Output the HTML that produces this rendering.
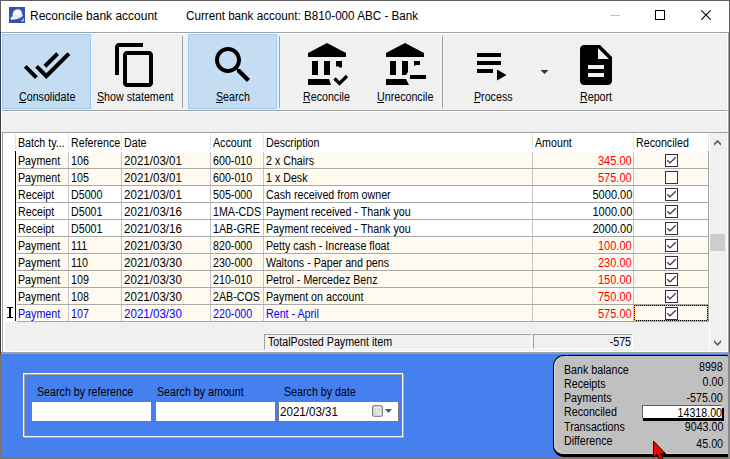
<!DOCTYPE html>
<html><head><meta charset="utf-8">
<style>
*{margin:0;padding:0;box-sizing:border-box}
html,body{width:730px;height:459px;overflow:hidden;background:#fff}
body{position:relative;font-family:"Liberation Sans",sans-serif;font-size:11px;color:#000}
.a{position:absolute}
.t{position:absolute;white-space:nowrap;line-height:13px}
u{text-decoration:none;border-bottom:1px solid #000}
.tb{position:absolute;top:34px;height:75px}
.tb.hot{background:#c4ddf3;border:1px solid #99cdf7}
.lbl{position:absolute;white-space:nowrap;font-size:11px;line-height:13px;top:55px;left:0;right:0;text-align:center}
.sep{position:absolute;top:36px;width:1px;height:72px;background:#a0a0a0}
.row{position:absolute;left:16px;width:692px;height:17px;border-bottom:1px solid #c8c8c8}
.hc{position:absolute;top:133px;height:18px;line-height:18px;white-space:nowrap}
.c{position:absolute;height:16px;line-height:16px;white-space:nowrap;font-size:12px;transform:scaleX(0.89);transform-origin:0 0}
.c.r{transform-origin:100% 0}
.inp{position:absolute;top:401px;height:21px;background:#fff;border:1px solid #7a7a7a}
.cb{position:absolute;width:13px;height:13px;border:1px solid #333;background:#fff}
</style></head><body>
<!-- window borders -->
<div class="a" style="left:0;top:0;width:730px;height:1px;background:#5f5f5f"></div>
<div class="a" style="left:0;top:0;width:1px;height:33px;background:#5f5f5f"></div><div class="a" style="left:0;top:33px;width:1px;height:321px;background:#3c3c3c"></div>
<div class="a" style="left:729px;top:0;width:1px;height:354px;background:#5f5f5f"></div>

<!-- title bar -->
<svg class="a" style="left:9px;top:7px" width="16" height="16" viewBox="0 0 16 16"><rect width="16" height="16" fill="#2f53ae"/><path d="M3.6 9.5 C3.2 5.5 4.8 2.4 8.6 2.2 C12 2.1 13.3 4.5 12.9 8.2 Z" fill="#f6f6fa"/><ellipse cx="7.6" cy="9.9" rx="6.6" ry="2.1" transform="rotate(-17 7.6 9.9)" fill="#ececf4"/><path d="M11.8 14.2 L15 10.8 L14.6 14.4 Z" fill="#c4cce4"/></svg>
<div class="t" style="left:30px;top:9px;font-size:12px;line-height:15px">Reconcile bank account</div>
<div class="t" style="left:186px;top:9px;font-size:12px;line-height:15px;transform:scaleX(0.972);transform-origin:0 0">Current bank account: B810-000 ABC - Bank</div>
<div class="a" style="left:610px;top:15px;width:10px;height:1px;background:#c0c0c0"></div>
<div class="a" style="left:655px;top:10px;width:10px;height:10px;border:1px solid #000"></div>

<!-- toolbar -->
<div class="a" style="left:1px;top:32px;width:728px;height:1px;background:#a0a0a0"></div>
<div class="a" style="left:2px;top:34px;width:725px;height:76px;background:#f0f0f0"></div>
<div class="a" style="left:2px;top:110px;width:725px;height:1px;background:#a0a0a0"></div>
<div class="a" style="left:2px;top:112px;width:725px;height:20px;background:#f0f0f0"></div>
<div class="a" style="left:728px;top:33px;width:1px;height:321px;background:#a0a0a0"></div>

<div class="tb hot" style="left:2px;width:89px"></div>
<div class="sep" style="left:182px"></div>
<div class="tb hot" style="left:188px;width:89px"></div>
<div class="sep" style="left:279px"></div>
<div class="sep" style="left:442px"></div>
<div class="c" style="left:19px;top:89px">Consolidate</div>
<div class="c" style="left:97px;top:89px">Show statement</div>
<div class="c" style="left:216px;top:89px">Search</div>
<div class="c" style="left:303px;top:89px">Reconcile</div>
<div class="c" style="left:377px;top:89px">Unreconcile</div>
<div class="c" style="left:474px;top:89px">Process</div>
<div class="c" style="left:580px;top:89px">Report</div>
<div class="a" style="left:19px;top:102px;width:7px;height:1px;background:#000"></div>
<div class="a" style="left:97px;top:102px;width:7px;height:1px;background:#000"></div>
<div class="a" style="left:216px;top:102px;width:7px;height:1px;background:#000"></div>
<div class="a" style="left:303px;top:102px;width:7px;height:1px;background:#000"></div>
<div class="a" style="left:377px;top:102px;width:7px;height:1px;background:#000"></div>
<div class="a" style="left:474px;top:102px;width:6px;height:1px;background:#000"></div>
<div class="a" style="left:580px;top:102px;width:7px;height:1px;background:#000"></div>
<svg class="a" style="left:0;top:0" width="730" height="459">
<path transform="translate(23,41) scale(2)" d="M18 7l-1.41-1.41-6.34 6.34 1.41 1.41L18 7zm4.24-1.41L11.66 16.17 7.48 12l-1.41 1.41L11.66 19l12-12-1.42-1.41zM.41 13.41L6 19l1.41-1.41L1.83 12 .41 13.41z"/>
<path transform="translate(111,41) scale(2)" d="M16 1H4c-1.1 0-2 .9-2 2v14h2V3h12V1zm3 4H8c-1.1 0-2 .9-2 2v14c0 1.1.9 2 2 2h11c1.1 0 2-.9 2-2V7c0-1.1-.9-2-2-2zm0 16H8V7h11v14z"/>
<path transform="translate(209,41) scale(2)" d="M15.5 14h-.79l-.28-.27C15.41 12.59 16 11.11 16 9.5 16 5.91 13.09 3 9.5 3S3 5.91 3 9.5 5.91 16 9.5 16c1.61 0 3.09-.59 4.23-1.570l.27.28v.79l5 4.99L20.49 19l-4.99-5zm-6 0C7.01 14 5 11.99 5 9.5S7.01 5 9.5 5 14 7.01 14 9.5 11.99 14 9.5 14z"/>
<!-- reconcile -->
<polygon points="308,53 327,43 346,53 346,57 308,57"/>
<rect x="312" y="61" width="6" height="14"/>
<rect x="324" y="61" width="6" height="14"/>
<polygon points="336,61 342,61 342,67.5 339,67.5 339,66.5 336,66.5"/>
<polygon points="308,79 329,79 331,85 308,85"/>
<polyline points="334.5,78.5 339.5,83.5 347,76" fill="none" stroke="#000" stroke-width="3.2"/>
<!-- unreconcile -->
<polygon points="386,53 405,43 424,53 424,57 386,57"/>
<rect x="390" y="61" width="6" height="14"/>
<polygon points="402,61 408,61 408,72 406,75 402,75"/>
<polygon points="414,61 420,61 420,65 416,65 414,66"/>
<rect x="410" y="75" width="16" height="4"/>
<polygon points="386,79 406,79 409,85 386,85"/>
<!-- process -->
<rect x="477" y="53" width="24" height="4"/>
<rect x="477" y="61" width="24" height="4"/>
<rect x="477" y="69" width="16" height="4"/>
<polygon points="497,69.5 506.5,75 497,80.5"/>
<polygon points="540.5,70 548.5,70 544.5,74" fill="#333"/>
<!-- report -->
<path transform="translate(572,41) scale(2)" d="M14 2H6c-1.1 0-1.99.9-1.99 2L4 20c0 1.1.89 2 1.99 2H18c1.1 0 2-.9 2-2V8l-6-6zm2 16H8v-2h8v2zm0-4H8v-2h8v2zm-3-5V3.5L18.5 9H13z"/>
<!-- close -->
<path d="M701.3 10.3 L710.7 19.7 M710.7 10.3 L701.3 19.7" stroke="#000" stroke-width="1.1"/>
</svg>
<!-- grid -->
<div class="a" style="left:1px;top:132px;width:727px;height:222px;background:#fff"></div>
<div class="a" style="left:2px;top:132px;width:726px;height:1px;background:#a0a0a0"></div>
<div class="a" style="left:2px;top:132px;width:1px;height:220px;background:#a0a0a0"></div>
<div class="a" style="left:5px;top:322px;width:704px;height:29px;background:#f0f0f0"></div>
<div class="a" style="left:1px;top:352px;width:728px;height:2px;background:#a0a0a0"></div>

<!-- scrollbar -->
<div class="a" style="left:710px;top:133px;width:17px;height:218px;background:#f0f0f0"></div>
<div class="a" style="left:710px;top:234px;width:15px;height:17px;background:#cdcdcd"></div>
<svg class="a" style="left:0;top:0" width="730" height="459"><polygon points="714,143.3 717.5,139.8 721,143.3 721,145.8 717.5,142.3 714,145.8" fill="#606060"/><polygon points="714,340 717.5,343.5 721,340 721,342.5 717.5,346 714,342.5" fill="#606060"/></svg>
<!-- totals -->
<div class="a" style="left:264px;top:334px;width:268px;height:16px;border-top:1px solid #a0a0a0;border-left:1px solid #a0a0a0;border-right:1px solid #fff;border-bottom:1px solid #fff"></div>
<div class="c" style="left:268px;top:334px">TotalPosted Payment item</div>
<div class="a" style="left:533px;top:334px;width:100px;height:15px;border-top:1px solid #a0a0a0;border-left:1px solid #a0a0a0;border-right:1px solid #fff;border-bottom:1px solid #fff"></div>
<div class="c r" style="right:99px;top:334px">-575</div>

<div class="a" style="left:3px;top:133px;width:705px;height:19px;background:#fff"></div>
<div class="c" style="left:18px;top:135px">Batch ty...</div>
<div class="c" style="left:71px;top:135px">Reference</div>
<div class="c" style="left:124px;top:135px">Date</div>
<div class="c" style="left:213px;top:135px">Account</div>
<div class="c" style="left:266px;top:135px">Description</div>
<div class="c" style="left:535px;top:135px">Amount</div>
<div class="c" style="left:636px;top:135px">Reconciled</div>
<div class="a" style="left:15px;top:134px;width:1px;height:16px;background:#e3e3e3"></div>
<div class="a" style="left:68px;top:134px;width:1px;height:16px;background:#e3e3e3"></div>
<div class="a" style="left:121px;top:134px;width:1px;height:16px;background:#e3e3e3"></div>
<div class="a" style="left:210px;top:134px;width:1px;height:16px;background:#e3e3e3"></div>
<div class="a" style="left:263px;top:134px;width:1px;height:16px;background:#e3e3e3"></div>
<div class="a" style="left:532px;top:134px;width:1px;height:16px;background:#e3e3e3"></div>
<div class="a" style="left:633px;top:134px;width:1px;height:16px;background:#e3e3e3"></div>
<div class="a" style="left:708px;top:134px;width:1px;height:16px;background:#e3e3e3"></div>
<div class="a" style="left:3px;top:152px;width:14px;height:170px;background:#fff"></div>
<div class="a" style="left:17px;top:153px;width:691px;height:15px;background:#fffaf0"></div>
<div class="a" style="left:17px;top:170px;width:691px;height:15px;background:#fffaf0"></div>
<div class="a" style="left:17px;top:187px;width:691px;height:15px;background:#fff"></div>
<div class="a" style="left:17px;top:204px;width:691px;height:15px;background:#fff"></div>
<div class="a" style="left:17px;top:221px;width:691px;height:15px;background:#fff"></div>
<div class="a" style="left:17px;top:238px;width:691px;height:15px;background:#fffaf0"></div>
<div class="a" style="left:17px;top:255px;width:691px;height:15px;background:#fffaf0"></div>
<div class="a" style="left:17px;top:272px;width:691px;height:15px;background:#fffaf0"></div>
<div class="a" style="left:17px;top:289px;width:691px;height:15px;background:#fffaf0"></div>
<div class="a" style="left:17px;top:306px;width:691px;height:15px;background:#fffaf0"></div>
<div class="a" style="left:68px;top:152px;width:1px;height:170px;background:#c4c4c4"></div>
<div class="a" style="left:69px;top:152px;width:1px;height:170px;background:#fff"></div>
<div class="a" style="left:121px;top:152px;width:1px;height:170px;background:#c4c4c4"></div>
<div class="a" style="left:122px;top:152px;width:1px;height:170px;background:#fff"></div>
<div class="a" style="left:210px;top:152px;width:1px;height:170px;background:#c4c4c4"></div>
<div class="a" style="left:211px;top:152px;width:1px;height:170px;background:#fff"></div>
<div class="a" style="left:263px;top:152px;width:1px;height:170px;background:#c4c4c4"></div>
<div class="a" style="left:264px;top:152px;width:1px;height:170px;background:#fff"></div>
<div class="a" style="left:532px;top:152px;width:1px;height:170px;background:#c4c4c4"></div>
<div class="a" style="left:533px;top:152px;width:1px;height:170px;background:#fff"></div>
<div class="a" style="left:633px;top:152px;width:1px;height:170px;background:#c4c4c4"></div>
<div class="a" style="left:634px;top:152px;width:1px;height:170px;background:#fff"></div>
<div class="a" style="left:17px;top:168px;width:691px;height:1px;background:#a8a8a8"></div>
<div class="a" style="left:17px;top:185px;width:691px;height:1px;background:#a8a8a8"></div>
<div class="a" style="left:17px;top:202px;width:691px;height:1px;background:#a8a8a8"></div>
<div class="a" style="left:17px;top:219px;width:691px;height:1px;background:#a8a8a8"></div>
<div class="a" style="left:17px;top:236px;width:691px;height:1px;background:#a8a8a8"></div>
<div class="a" style="left:17px;top:253px;width:691px;height:1px;background:#a8a8a8"></div>
<div class="a" style="left:17px;top:270px;width:691px;height:1px;background:#a8a8a8"></div>
<div class="a" style="left:17px;top:287px;width:691px;height:1px;background:#a8a8a8"></div>
<div class="a" style="left:17px;top:304px;width:691px;height:1px;background:#a8a8a8"></div>
<div class="a" style="left:17px;top:321px;width:691px;height:1px;background:#a8a8a8"></div>
<div class="c" style="left:18px;top:153px;color:#000">Payment</div>
<div class="c" style="left:71px;top:153px;color:#000">106</div>
<div class="c" style="left:124px;top:153px;color:#000;transform:scaleX(0.965)">2021/03/01</div>
<div class="c" style="left:213px;top:153px;color:#000">600-010</div>
<div class="c" style="left:266px;top:153px;color:#000">2 x Chairs</div>
<div class="c r" style="right:98px;top:153px;color:#ff0000;transform:scaleX(0.92)">345.00</div>
<div class="cb" style="left:665px;top:154px"><svg class="a" style="left:-1px;top:-1px" width="13" height="13" viewBox="0 0 13 13"><path d="M2.3 6.2 L5 8.9 L10.8 3.2" fill="none" stroke="#3a3a3a" stroke-width="1.35"/></svg></div>
<div class="c" style="left:18px;top:170px;color:#000">Payment</div>
<div class="c" style="left:71px;top:170px;color:#000">105</div>
<div class="c" style="left:124px;top:170px;color:#000;transform:scaleX(0.965)">2021/03/01</div>
<div class="c" style="left:213px;top:170px;color:#000">600-010</div>
<div class="c" style="left:266px;top:170px;color:#000">1 x Desk</div>
<div class="c r" style="right:98px;top:170px;color:#ff0000;transform:scaleX(0.92)">575.00</div>
<div class="cb" style="left:665px;top:171px"></div>
<div class="c" style="left:18px;top:187px;color:#000">Receipt</div>
<div class="c" style="left:71px;top:187px;color:#000">D5000</div>
<div class="c" style="left:124px;top:187px;color:#000;transform:scaleX(0.965)">2021/03/01</div>
<div class="c" style="left:213px;top:187px;color:#000">505-000</div>
<div class="c" style="left:266px;top:187px;color:#000">Cash received from owner</div>
<div class="c r" style="right:98px;top:187px;color:#000;transform:scaleX(0.92)">5000.00</div>
<div class="cb" style="left:665px;top:188px"><svg class="a" style="left:-1px;top:-1px" width="13" height="13" viewBox="0 0 13 13"><path d="M2.3 6.2 L5 8.9 L10.8 3.2" fill="none" stroke="#3a3a3a" stroke-width="1.35"/></svg></div>
<div class="c" style="left:18px;top:204px;color:#000">Receipt</div>
<div class="c" style="left:71px;top:204px;color:#000">D5001</div>
<div class="c" style="left:124px;top:204px;color:#000;transform:scaleX(0.965)">2021/03/16</div>
<div class="c" style="left:213px;top:204px;color:#000">1MA-CDS</div>
<div class="c" style="left:266px;top:204px;color:#000">Payment received - Thank you</div>
<div class="c r" style="right:98px;top:204px;color:#000;transform:scaleX(0.92)">1000.00</div>
<div class="cb" style="left:665px;top:205px"><svg class="a" style="left:-1px;top:-1px" width="13" height="13" viewBox="0 0 13 13"><path d="M2.3 6.2 L5 8.9 L10.8 3.2" fill="none" stroke="#3a3a3a" stroke-width="1.35"/></svg></div>
<div class="c" style="left:18px;top:221px;color:#000">Receipt</div>
<div class="c" style="left:71px;top:221px;color:#000">D5001</div>
<div class="c" style="left:124px;top:221px;color:#000;transform:scaleX(0.965)">2021/03/16</div>
<div class="c" style="left:213px;top:221px;color:#000">1AB-GRE</div>
<div class="c" style="left:266px;top:221px;color:#000">Payment received - Thank you</div>
<div class="c r" style="right:98px;top:221px;color:#000;transform:scaleX(0.92)">2000.00</div>
<div class="cb" style="left:665px;top:222px"><svg class="a" style="left:-1px;top:-1px" width="13" height="13" viewBox="0 0 13 13"><path d="M2.3 6.2 L5 8.9 L10.8 3.2" fill="none" stroke="#3a3a3a" stroke-width="1.35"/></svg></div>
<div class="c" style="left:18px;top:238px;color:#000">Payment</div>
<div class="c" style="left:71px;top:238px;color:#000">111</div>
<div class="c" style="left:124px;top:238px;color:#000;transform:scaleX(0.965)">2021/03/30</div>
<div class="c" style="left:213px;top:238px;color:#000">820-000</div>
<div class="c" style="left:266px;top:238px;color:#000">Petty cash - Increase float</div>
<div class="c r" style="right:98px;top:238px;color:#ff0000;transform:scaleX(0.92)">100.00</div>
<div class="cb" style="left:665px;top:239px"><svg class="a" style="left:-1px;top:-1px" width="13" height="13" viewBox="0 0 13 13"><path d="M2.3 6.2 L5 8.9 L10.8 3.2" fill="none" stroke="#3a3a3a" stroke-width="1.35"/></svg></div>
<div class="c" style="left:18px;top:255px;color:#000">Payment</div>
<div class="c" style="left:71px;top:255px;color:#000">110</div>
<div class="c" style="left:124px;top:255px;color:#000;transform:scaleX(0.965)">2021/03/30</div>
<div class="c" style="left:213px;top:255px;color:#000">230-000</div>
<div class="c" style="left:266px;top:255px;color:#000">Waltons - Paper and pens</div>
<div class="c r" style="right:98px;top:255px;color:#ff0000;transform:scaleX(0.92)">230.00</div>
<div class="cb" style="left:665px;top:256px"><svg class="a" style="left:-1px;top:-1px" width="13" height="13" viewBox="0 0 13 13"><path d="M2.3 6.2 L5 8.9 L10.8 3.2" fill="none" stroke="#3a3a3a" stroke-width="1.35"/></svg></div>
<div class="c" style="left:18px;top:272px;color:#000">Payment</div>
<div class="c" style="left:71px;top:272px;color:#000">109</div>
<div class="c" style="left:124px;top:272px;color:#000;transform:scaleX(0.965)">2021/03/30</div>
<div class="c" style="left:213px;top:272px;color:#000">210-010</div>
<div class="c" style="left:266px;top:272px;color:#000">Petrol - Mercedez Benz</div>
<div class="c r" style="right:98px;top:272px;color:#ff0000;transform:scaleX(0.92)">150.00</div>
<div class="cb" style="left:665px;top:273px"><svg class="a" style="left:-1px;top:-1px" width="13" height="13" viewBox="0 0 13 13"><path d="M2.3 6.2 L5 8.9 L10.8 3.2" fill="none" stroke="#3a3a3a" stroke-width="1.35"/></svg></div>
<div class="c" style="left:18px;top:289px;color:#000">Payment</div>
<div class="c" style="left:71px;top:289px;color:#000">108</div>
<div class="c" style="left:124px;top:289px;color:#000;transform:scaleX(0.965)">2021/03/30</div>
<div class="c" style="left:213px;top:289px;color:#000">2AB-COS</div>
<div class="c" style="left:266px;top:289px;color:#000">Payment on account</div>
<div class="c r" style="right:98px;top:289px;color:#ff0000;transform:scaleX(0.92)">750.00</div>
<div class="cb" style="left:665px;top:290px"><svg class="a" style="left:-1px;top:-1px" width="13" height="13" viewBox="0 0 13 13"><path d="M2.3 6.2 L5 8.9 L10.8 3.2" fill="none" stroke="#3a3a3a" stroke-width="1.35"/></svg></div>
<div class="c" style="left:18px;top:306px;color:#0000ff">Payment</div>
<div class="c" style="left:71px;top:306px;color:#0000ff">107</div>
<div class="c" style="left:124px;top:306px;color:#0000ff;transform:scaleX(0.965)">2021/03/30</div>
<div class="c" style="left:213px;top:306px;color:#0000ff">220-000</div>
<div class="c" style="left:266px;top:306px;color:#0000ff">Rent - April</div>
<div class="c r" style="right:98px;top:306px;color:#ff0000;transform:scaleX(0.92)">575.00</div>
<div class="cb" style="left:665px;top:307px"><svg class="a" style="left:-1px;top:-1px" width="13" height="13" viewBox="0 0 13 13"><path d="M2.3 6.2 L5 8.9 L10.8 3.2" fill="none" stroke="#3a3a3a" stroke-width="1.35"/></svg></div>
<div class="a" style="left:708px;top:151px;width:1px;height:171px;background:#a0a0a0"></div>
<div class="a" style="left:15px;top:151px;width:1px;height:170px;background:#000"></div>
<div class="a" style="left:634px;top:305px;width:74px;height:1px;background:repeating-linear-gradient(90deg,#000 0 1px,#ff9a20 1px 2px)"></div>
<div class="a" style="left:634px;top:320px;width:74px;height:1px;background:repeating-linear-gradient(90deg,#000 0 1px,#ff9a20 1px 2px)"></div>
<div class="a" style="left:634px;top:305px;width:1px;height:16px;background:repeating-linear-gradient(180deg,#000 0 1px,#ff9a20 1px 2px)"></div>
<div class="a" style="left:707px;top:305px;width:1px;height:16px;background:repeating-linear-gradient(180deg,#000 0 1px,#ff9a20 1px 2px)"></div>
<svg class="a" style="left:5px;top:306px" width="10" height="13" viewBox="0 0 10 13"><path d="M2 1.5 H5 M5 1.5 H8 M2 11.5 H5 M5 11.5 H8" stroke="#000" stroke-width="1.1" fill="none"/><path d="M5 2 V11" stroke="#000" stroke-width="2" fill="none"/></svg>

<!-- bottom panel -->
<div class="a" style="left:0;top:354px;width:730px;height:105px;background:#4580ee"></div>
<div class="a" style="left:0;top:354px;width:1px;height:105px;background:#7a7266"></div>
<div class="a" style="left:0;top:458px;width:730px;height:1px;background:#7a7266"></div>
<div class="a" style="left:24px;top:374px;width:380px;height:64px;border:1px solid #b0a488"></div>
<div class="a" style="left:23px;top:373px;width:380px;height:64px;border:1px solid #fff"></div>
<div class="c" style="left:37px;top:384px">Search by reference</div>
<div class="c" style="left:157px;top:384px">Search by amount</div>
<div class="c" style="left:284px;top:384px">Search by date</div>
<div class="inp" style="left:31px;width:121px"></div>
<div class="inp" style="left:155px;width:121px"></div>
<div class="inp" style="left:278px;width:121px"></div>
<div class="c" style="left:280px;top:404px;transform:scaleX(0.965)">2021/03/31</div>
<svg class="a" style="left:0;top:0" width="730" height="459"><rect x="372.7" y="405.7" width="9.6" height="10.6" rx="1.5" fill="#eef2f8" stroke="#706868" stroke-width="1.1"/><path d="M374.5 408.5h1.5v1.5h-1.5zM376.7 408.5h1.5v1.5h-1.5zM378.9 408.5h1.5v1.5h-1.5zM374.5 410.7h1.5v1.5h-1.5zM376.7 410.7h1.5v1.5h-1.5zM378.9 410.7h1.5v1.5h-1.5zM374.5 412.9h1.5v1.5h-1.5zM376.7 412.9h1.5v1.5h-1.5z" fill="#c0c4cc"/><polygon points="385,409 392,409 388.5,413" fill="#3a5a88"/></svg>
<!-- summary -->
<div class="a" style="left:553px;top:355px;width:176px;height:102px;background:#c0c0c0;border:1px solid #000;border-width:1px 0 3px 1px;border-radius:11px 3px 0 11px"></div>
<div class="a" style="left:554px;top:356px;width:174px;height:98px;border:1px solid #d4d4d4;border-width:0 0 1px 1px;border-radius:10px 0 0 10px"></div>
<div class="a" style="left:728px;top:354px;width:2px;height:105px;background:#8a8a8a"></div>
<div class="c" style="left:564px;top:362px">Bank balance</div>
<div class="c" style="left:564px;top:376px">Receipts</div>
<div class="c" style="left:564px;top:390px">Payments</div>
<div class="c" style="left:564px;top:404px">Reconciled</div>
<div class="c" style="left:564px;top:419px">Transactions</div>
<div class="c" style="left:564px;top:433px">Difference</div>
<div class="a" style="left:643px;top:408px;width:81px;height:13px;background:#000"></div>
<div class="a" style="left:642px;top:405px;width:80px;height:13px;background:#fff;border:1px solid #606060;border-width:1px 1px 0 1px;border-right-color:#d8d8d8"></div>
<div class="c r" style="right:7px;top:359px">8998</div>
<div class="c r" style="right:7px;top:374px">0.00</div>
<div class="c r" style="right:7px;top:390px">-575.00</div>
<div class="c r" style="right:8px;top:405px">14318.00</div>
<div class="c r" style="right:7px;top:419px">9043.00</div>
<div class="c r" style="right:7px;top:436px">45.00</div>
<!-- cursor -->
<svg class="a" style="left:0;top:0" width="730" height="459"><path d="M653.5 441 L653.5 457.5 L657 454 L659.5 459.5 L663 459.5 L660.5 453.5 L665.5 453.5 Z" fill="#ff0000" stroke="#000" stroke-width="0.9"/></svg>

</body></html>
